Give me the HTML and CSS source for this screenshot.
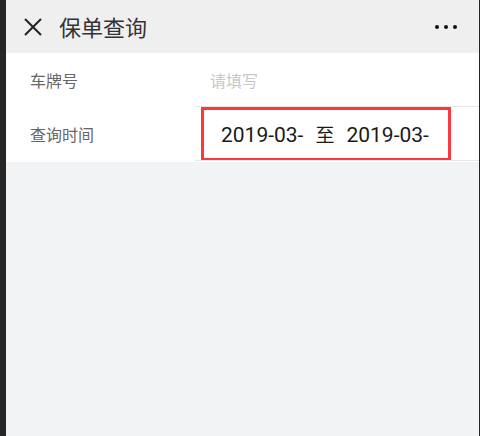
FILE: index.html
```html
<!DOCTYPE html>
<html lang="zh-CN">
<head>
    <meta charset="UTF-8">
    <meta name="viewport" content="width=device-width, initial-scale=1.0">
    <title>保单查询</title>
    <link rel="stylesheet" href="styles.css">
</head>
<body>
    <div class="page">
        <div class="header">
            <svg class="close" width="20" height="20" viewBox="0 0 20 20">
                <path d="M2 2 L18 18 M18 2 L2 18" stroke="#222" stroke-width="2" fill="none"/>
            </svg>
            <span class="title">保单查询</span>
            <span class="more"><i></i><i></i><i></i></span>
        </div>

        <div class="form">
            <div class="row">
                <div class="label">车牌号</div>
                <div class="value placeholder">请填写</div>
            </div>
            <div class="row">
                <div class="label">查询时间</div>
                <div class="value lined">
                    <div class="mark">
                        <p class="range">2019-03-<span class="to">至</span>2019-03-</p>
                    </div>
                </div>
            </div>
        </div>

        <div class="rest"></div>
    </div>
</body>
</html>
```

FILE: styles.css
```css
html, body {
    margin: 0;
    height: 100%;
}
body {
    background-color: #262626;
    font-family: "Noto Sans CJK SC", "Noto Sans", Roboto, sans-serif;
    overflow: hidden;
}
.page {
    margin: 0 1px 0 6px;
    height: 436px;
    display: flex;
    flex-direction: column;
    background-color: #f2f3f5;
}
.header {
    height: 53px;
    background-color: #efefef;
    display: flex;
    align-items: center;
    padding: 0 22px 0 17px;
}
.close {
    margin-right: 16px;
}
.title {
    font-size: 22px;
    color: #333;
    flex: 1;
    margin-top: -2px;
}
.more {
    display: flex;
    gap: 5px;
}
.more i {
    width: 4px;
    height: 4px;
    border-radius: 50%;
    background-color: #111;
}
.form {
    background-color: #fff;
    padding-bottom: 1px;
}
.row {
    display: flex;
    height: 53px;
}
.row + .row {
    height: 55px;
}
.label {
    width: 189px;
    padding-left: 24px;
    box-sizing: border-box;
    font-size: 16px;
    color: #666;
    display: flex;
    align-items: center;
}
.value {
    flex: 1;
    display: flex;
    align-items: center;
}
.placeholder {
    padding-left: 15px;
    font-size: 16px;
    color: #c8c8c8;
}
.lined {
    border-top: 1px solid #e6e6e6;
    border-bottom: 1px solid #e6e6e6;
    align-items: stretch;
}
.mark {
    margin-left: 6px;
    width: 250px;
    box-sizing: border-box;
    border: 3px solid #f83a3a;
    border-bottom-width: 2px;
    display: flex;
    align-items: center;
    padding-left: 17px;
}
.range {
    margin: 0;
    font-family: Roboto, "Noto Sans CJK SC", sans-serif;
    font-size: 21px;
    line-height: 24px;
    color: #1a1a1a;
    white-space: nowrap;
}
.to {
    margin: 0 12px;
    font-family: "Noto Sans CJK SC", sans-serif;
    font-size: 19px;
}
.rest {
    flex: 1;
}
```
